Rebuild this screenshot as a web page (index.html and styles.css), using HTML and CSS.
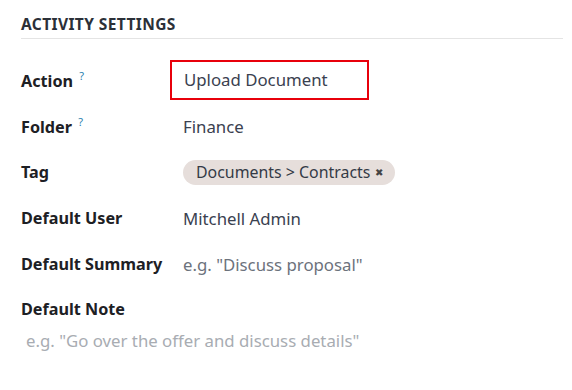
FILE: index.html
```html
<!DOCTYPE html>
<html>
<head>
  <title>Activity Settings</title>
  <meta name="viewport" content="width=device-width, initial-scale=1.0">
  <link rel="stylesheet" href="styles.css">
</head>
<body>
  <div class="sheet">
    <h2 class="section-title">ACTIVITY SETTINGS</h2>
    <div class="fields">
      <div class="label">Action <sup class="help">?</sup></div>
      <div class="value"><span class="highlight">Upload Document</span></div>

      <div class="label">Folder <sup class="help">?</sup></div>
      <div class="value">Finance</div>

      <div class="label">Tag</div>
      <div class="value"><span class="tag">Documents &gt; Contracts <span class="tag-x">&#10006;</span></span></div>

      <div class="label">Default User</div>
      <div class="value">Mitchell Admin</div>

      <div class="label">Default Summary</div>
      <div class="value placeholder">e.g. "Discuss proposal"</div>
    </div>
    <div class="note">
      <div class="label">Default Note</div>
      <div class="note-text">e.g. "Go over the offer and discuss details"</div>
    </div>
  </div>
</body>
</html>
```

FILE: styles.css
```css
body {
  margin: 0;
  background: #fff;
  font-family: "Noto Sans", "Open Sans", sans-serif;
  color: #1f2327;
}
.sheet {
  padding: 14px 9px 0 21px;
}
.section-title {
  margin: 0;
  font-size: 15.5px;
  line-height: 20px;
  font-weight: 700;
  letter-spacing: 0.4px;
  color: #2b3038;
  padding-bottom: 4px;
  border-bottom: 1px solid #e4e4e4;
}
.fields {
  display: grid;
  grid-template-columns: 162px 1fr;
  grid-auto-rows: 46px;
  align-items: center;
  margin-top: 18px;
}
.label {
  font-size: 16.2px;
  font-weight: 700;
  color: #1d2024;
}
.help {
  color: #2a7fb0;
  font-size: 11px;
  font-weight: 400;
  vertical-align: 7px;
  margin-left: 2px;
}
.value {
  font-size: 16.8px;
  color: #3a4150;
}
.highlight {
  display: inline-block;
  margin-left: -13px;
  padding: 6px 39px 7px 12px;
  border: 2px solid #e8000b;
}
.tag {
  display: inline-block;
  background: #e6dedb;
  border-radius: 13px;
  padding: 1px 12px 2px 13px;
  font-size: 15.9px;
  color: #343a46;
}
.tag-x {
  font-size: 10px;
  vertical-align: 2px;
  margin-left: 1px;
  color: #444;
}
.placeholder {
  color: #6c727c;
}
.note {
  padding-top: 11px;
}
.note-text {
  margin-top: 9px;
  padding-left: 5px;
  font-size: 16.8px;
  color: #a8acb2;
}
```
